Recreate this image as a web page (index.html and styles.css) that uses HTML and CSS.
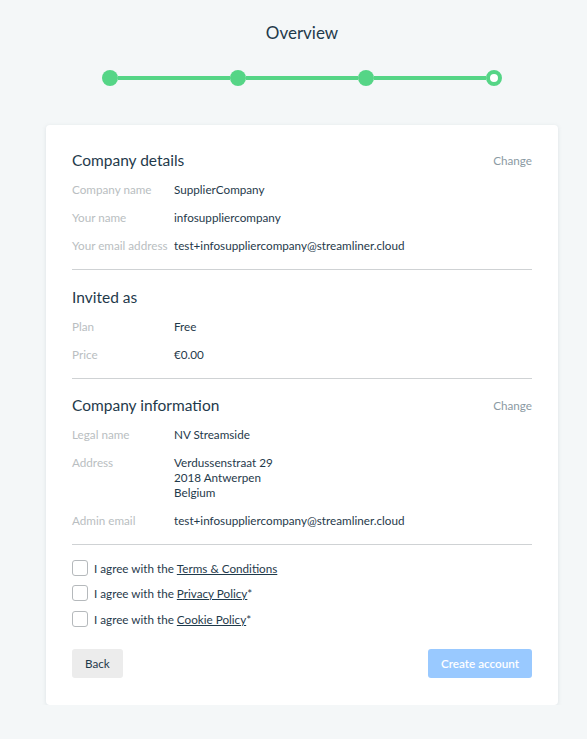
FILE: index.html
```html
<!DOCTYPE html>
<html lang="en">
<head>
    <meta charset="UTF-8">
    <meta name="viewport" content="width=device-width, initial-scale=1.0">
    <title>Overview</title>
    <link rel="stylesheet" href="styles.css">
</head>
<body>
    <div class="wrapper">
        <header class="page-header">
            <h1>Overview</h1>
            <div class="stepper">
                <span class="step done"></span>
                <span class="step-line"></span>
                <span class="step done"></span>
                <span class="step-line"></span>
                <span class="step done"></span>
                <span class="step-line"></span>
                <span class="step current"></span>
            </div>
        </header>
        <main class="card">
            <section class="section">
                <div class="section-head">
                    <h2>Company details</h2>
                    <a class="change" href="#">Change</a>
                </div>
                <div class="row"><span class="label">Company name</span><span class="value">SupplierCompany</span></div>
                <div class="row"><span class="label">Your name</span><span class="value">infosuppliercompany</span></div>
                <div class="row"><span class="label">Your email address</span><span class="value">test+infosuppliercompany@streamliner.cloud</span></div>
            </section>
            <section class="section">
                <div class="section-head">
                    <h2>Invited as</h2>
                </div>
                <div class="row"><span class="label">Plan</span><span class="value">Free</span></div>
                <div class="row"><span class="label">Price</span><span class="value">€0.00</span></div>
            </section>
            <section class="section">
                <div class="section-head">
                    <h2>Company information</h2>
                    <a class="change" href="#">Change</a>
                </div>
                <div class="row"><span class="label">Legal name</span><span class="value">NV Streamside</span></div>
                <div class="row"><span class="label">Address</span><span class="value">Verdussenstraat 29<br>2018 Antwerpen<br>Belgium</span></div>
                <div class="row"><span class="label">Admin email</span><span class="value">test+infosuppliercompany@streamliner.cloud</span></div>
            </section>
            <div class="agreements">
                <label class="check"><span class="box"></span>I agree with the&nbsp;<a href="#">Terms &amp; Conditions</a></label>
                <label class="check"><span class="box"></span>I agree with the&nbsp;<a href="#">Privacy Policy</a>*</label>
                <label class="check"><span class="box"></span>I agree with the&nbsp;<a href="#">Cookie Policy</a>*</label>
            </div>
            <div class="actions">
                <button class="btn btn-back">Back</button>
                <button class="btn btn-create" disabled>Create account</button>
            </div>
        </main>
    </div>
</body>
</html>
```

FILE: styles.css
```css
body {
    font-family: "Source Sans Pro", Lato, "Noto Sans", sans-serif;
    background-color: #f4f7f8;
    color: #1f3a4b;
    margin: 0;
    padding: 0;
}
.wrapper {
    width: 512px;
    margin-left: 46px;
}
.page-header {
    text-align: center;
    padding-top: 22px;
}
.page-header h1 {
    font-size: 17px;
    font-weight: 400;
    margin: 0;
    line-height: 22px;
}
.stepper {
    display: flex;
    align-items: center;
    width: 400px;
    margin: 26px auto 0;
    padding-bottom: 39px;
}
.step {
    width: 16px;
    height: 16px;
    border-radius: 50%;
    background-color: #55d586;
    box-sizing: border-box;
    flex: none;
}
.step.current {
    background-color: #fff;
    border: 4px solid #55d586;
}
.step-line {
    flex: 1;
    height: 4px;
    background-color: #55d586;
}
.card {
    background-color: #fff;
    padding: 23px 26px 27px;
    border-radius: 4px;
    box-shadow: 0 1px 4px rgba(120, 140, 150, 0.18);
}
.section {
    border-bottom: 1px solid #cfd2d4;
    padding-bottom: 9px;
    margin-bottom: 14.5px;
}
.section-head {
    display: flex;
    justify-content: space-between;
    align-items: center;
    margin-bottom: 4px;
}
.section-head h2 {
    font-size: 15.5px;
    font-weight: 400;
    margin: 0;
    line-height: 24px;
}
.change {
    font-size: 11.7px;
    color: #8b9aa3;
    text-decoration: none;
}
.row {
    display: flex;
    font-size: 11.7px;
    line-height: 15px;
    padding: 6px 0 7px;
}
.label {
    width: 102px;
    flex: none;
    color: #b9bec1;
}
.value {
    color: #1f3a4b;
}
.agreements {
    display: flex;
    flex-direction: column;
    gap: 9.5px;
}
.check {
    display: flex;
    align-items: center;
    font-size: 11.7px;
    line-height: 16px;
    color: #1f3a4b;
}
.check a {
    color: #1f3a4b;
}
.box {
    width: 16px;
    height: 16px;
    box-sizing: border-box;
    border: 1px solid #b5b9bc;
    border-radius: 3px;
    margin-right: 6px;
}
.actions {
    display: flex;
    justify-content: space-between;
    margin-top: 22px;
}
.btn {
    font-family: inherit;
    font-size: 11.7px;
    border: none;
    border-radius: 3px;
    height: 29px;
    padding: 0 13px;
}
.btn-back {
    background-color: #ececec;
    color: #1f3a4b;
}
.btn-create {
    background-color: #99c9ff;
    color: #fff;
    font-weight: 600;
}
```
